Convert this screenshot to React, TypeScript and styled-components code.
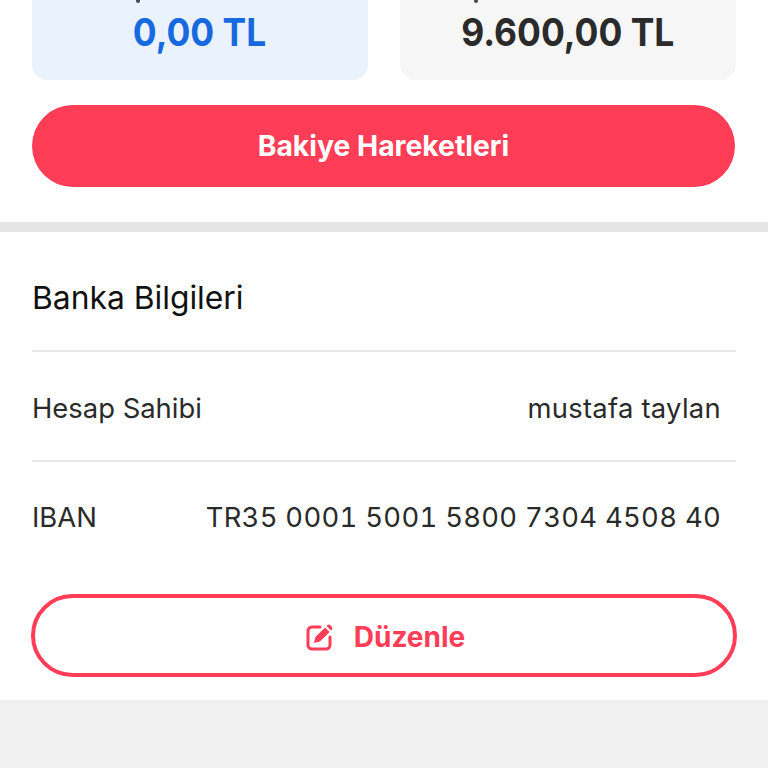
import * as React from 'react';
import styled, { createGlobalStyle } from 'styled-components';

const GlobalStyle = createGlobalStyle`
  html, body {
    margin: 0;
    padding: 0;
    background: #f0f0f0;
    font-family: Inter, 'Liberation Sans', sans-serif;
    overflow: hidden;
  }
`;

const Page = styled.div`
  width: 768px;
  height: 768px;
  overflow: hidden;
  background: #f0f0f0;
`;

const BalanceSection = styled.section`
  height: 222px;
  background: #fff;
  padding: 0 32px;
  box-sizing: border-box;
`;

const Cards = styled.div`
  display: grid;
  grid-template-columns: 336px 336px;
  justify-content: space-between;
  margin-bottom: 25px;
`;

const Card = styled.div<{ $tone: 'blue' | 'grey' }>`
  position: relative;
  height: 80px;
  overflow: hidden;
  display: flex;
  flex-direction: column;
  align-items: center;
  justify-content: flex-end;
  border-radius: 0 0 16px 16px;
  background: ${props => (props.$tone === 'blue' ? '#eaf2fe' : '#f6f6f6')};
`;

// the bottom of the label above, cut off by the top of the picture
const LabelTail = styled.span<{ $left: number }>`
  position: absolute;
  top: 0;
  left: ${props => props.$left}px;
  width: 4px;
  height: 3px;
  border-radius: 0 0 2px 2px;
  background: #4a4a4a;
`;

const Amount = styled.div<{ $tone: 'blue' | 'grey' }>`
  font-size: 38.5px;
  font-weight: 700;
  line-height: 44px;
  margin-bottom: 26px;
  transform: scaleX(0.92);
  white-space: nowrap;
  color: ${props => (props.$tone === 'blue' ? '#1769e0' : '#2b2b2b')};
`;

const PrimaryButton = styled.button`
  display: block;
  width: 703px;
  height: 82px;
  padding: 0;
  border: 0;
  border-radius: 41px;
  background: #ff3d57;
  color: #fff;
  font-family: inherit;
  font-size: 28.3px;
  font-weight: 700;
`;

const Divider = styled.div`
  height: 10px;
  background: #e4e4e4;
`;

const BankSection = styled.section`
  height: 468px;
  background: #fff;
  padding: 0 32px;
  box-sizing: border-box;
`;

const SectionTitle = styled.h2`
  margin: 0;
  height: 120px;
  padding-top: 12px;
  display: flex;
  align-items: center;
  border-bottom: 2px solid #e8e8e8;
  box-sizing: border-box;
  font-size: 31.8px;
  font-weight: 400;
  color: #111;
`;

const InfoRow = styled.div`
  height: 108px;
  padding: 3px 15px 0 0;
  display: flex;
  align-items: center;
  justify-content: space-between;
  box-sizing: border-box;
  font-size: 27.4px;
  color: #2a2a2a;
  & + & {
    height: 110px;
    padding-top: 1px;
    border-top: 2px solid #e8e8e8;
  }
`;

const Value = styled.span`
  font-variant-numeric: tabular-nums;
  letter-spacing: 0.3px;
  white-space: nowrap;
`;

const EditButton = styled.button`
  display: flex;
  align-items: center;
  justify-content: center;
  gap: 19px;
  width: 706px;
  height: 83px;
  margin: 24px 0 0 -1px;
  padding: 2px 0 0 2px;
  background: #fff;
  border: 4px solid #ff3d57;
  border-radius: 42px;
  color: #ff3d57;
  font-family: inherit;
  font-size: 28px;
  font-weight: 700;
`;

const EditIcon = () => (
  <svg width="30" height="30" viewBox="0 0 30 30" fill="none">
    <path
      d="M15 5H7a4 4 0 0 0-4 4v14a4 4 0 0 0 4 4h14a4 4 0 0 0 4-4v-8"
      stroke="#ff3d57"
      strokeWidth="3"
      strokeLinecap="round"
    />
    <path d="M9 21l1.4-6L20 5.4l4.6 4.6-9.6 9.6z" fill="#ff3d57" />
    <path d="M22 3.4a2.6 2.6 0 0 1 3.6 0l1 1a2.6 2.6 0 0 1 0 3.6L26 8.4 21.6 4z" fill="#ff3d57" />
  </svg>
);

const App: React.FC = () => {
  return (
    <Page>
      <GlobalStyle />
      <BalanceSection>
        <Cards>
          <Card $tone="blue">
            <LabelTail $left={104} />
            <Amount $tone="blue">0,00 TL</Amount>
          </Card>
          <Card $tone="grey">
            <LabelTail $left={74} />
            <Amount $tone="grey">9.600,00 TL</Amount>
          </Card>
        </Cards>
        <PrimaryButton>Bakiye Hareketleri</PrimaryButton>
      </BalanceSection>
      <Divider />
      <BankSection>
        <SectionTitle>Banka Bilgileri</SectionTitle>
        <InfoRow>
          <span>Hesap Sahibi</span>
          <Value>mustafa taylan</Value>
        </InfoRow>
        <InfoRow>
          <span>IBAN</span>
          <Value>TR35 0001 5001 5800 7304 4508 40</Value>
        </InfoRow>
        <EditButton>
          <EditIcon />
          Düzenle
        </EditButton>
      </BankSection>
    </Page>
  );
};

export default App;
